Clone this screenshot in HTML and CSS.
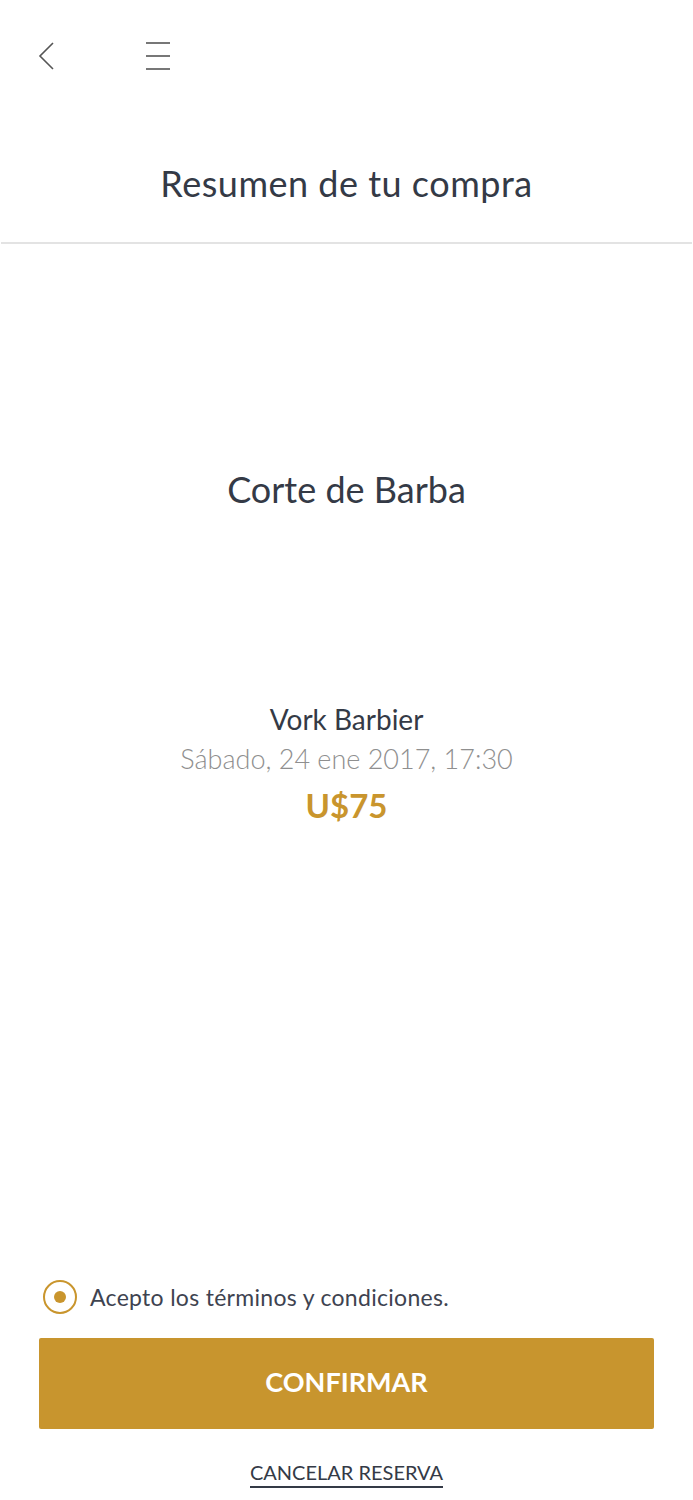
FILE: index.html
```html
<!DOCTYPE html>
<html lang="es">
<head>
    <meta charset="UTF-8">
    <meta name="viewport" content="width=device-width, initial-scale=1.0">
    <title>Resumen de tu compra</title>
    <link rel="stylesheet" href="styles.css">
</head>
<body>
    <div class="page">
        <header class="topbar">
            <a class="icon-btn back" href="#" aria-label="Volver">
                <svg width="18" height="28" viewBox="0 0 18 28">
                    <polyline points="15,1 2,14 15,27" fill="none" stroke="#555" stroke-width="1.6"/>
                </svg>
            </a>
            <a class="icon-btn menu" href="#" aria-label="Menú">
                <svg width="24" height="28" viewBox="0 0 24 28">
                    <line x1="0" y1="1" x2="24" y2="1" stroke="#555" stroke-width="1.6"/>
                    <line x1="0" y1="14" x2="24" y2="14" stroke="#555" stroke-width="1.6"/>
                    <line x1="0" y1="27" x2="24" y2="27" stroke="#555" stroke-width="1.6"/>
                </svg>
            </a>
        </header>

        <div class="page-title">
            <h1>Resumen de tu compra</h1>
        </div>

        <main class="summary">
            <h2 class="service">Corte de Barba</h2>
            <div class="details">
                <p class="shop">Vork Barbier</p>
                <p class="date">Sábado, 24 ene 2017, 17:30</p>
                <p class="price">U$75</p>
            </div>
        </main>

        <footer class="actions">
            <label class="terms">
                <span class="radio"><span class="radio-dot"></span></span>
                <span>Acepto los términos y condiciones.</span>
            </label>
            <button class="confirm-btn">CONFIRMAR</button>
            <a class="cancel-link" href="#">CANCELAR RESERVA</a>
        </footer>
    </div>
</body>
</html>
```

FILE: styles.css
```css
body {
    margin: 0;
    padding: 0;
    font-family: Lato, "Open Sans", sans-serif;
    background-color: #ffffff;
    color: #343a46;
}
.page {
    min-height: 100vh;
    display: flex;
    flex-direction: column;
}
.topbar {
    display: flex;
    align-items: center;
    height: 112px;
    padding: 0 0 0 38px;
}
.icon-btn {
    display: flex;
    align-items: center;
}
.icon-btn svg {
    display: block;
}
.menu {
    margin-left: 90px;
}
.page-title {
    height: 130px;
    display: flex;
    align-items: center;
    justify-content: center;
    border-bottom: 2px solid #e3e3e3;
    margin: 0 1px;
}
.page-title h1 {
    margin: 0;
    font-size: 36px;
    font-weight: 400;
    letter-spacing: 0.5px;
    color: #343a46;
    position: relative;
    top: 6px;
}
.summary {
    flex-grow: 1;
    display: flex;
    flex-direction: column;
    align-items: center;
    text-align: center;
}
.service {
    margin: 223px 0 0;
    font-size: 36px;
    font-weight: 400;
    line-height: 44px;
    color: #343a46;
}
.details {
    margin-top: 188px;
}
.details p {
    margin: 0;
}
.shop {
    font-size: 28px;
    line-height: 40px;
    color: #343a46;
}
.date {
    font-size: 27px;
    font-weight: 300;
    line-height: 40px;
    color: #8f8f8f;
}
.price {
    font-size: 33px;
    font-weight: 700;
    line-height: 46px;
    color: #c9952d;
    padding-top: 3px;
}
.actions {
    display: flex;
    flex-direction: column;
    align-items: center;
    padding: 0 39px 12px;
}
.terms {
    align-self: stretch;
    display: flex;
    align-items: center;
    gap: 13px;
    font-size: 23px;
    letter-spacing: 0.3px;
    color: #3e4350;
    padding-left: 4px;
    height: 36px;
}
.radio {
    width: 34px;
    height: 34px;
    border: 2px solid #c9952d;
    border-radius: 50%;
    display: flex;
    align-items: center;
    justify-content: center;
    box-sizing: border-box;
}
.radio-dot {
    width: 12px;
    height: 12px;
    border-radius: 50%;
    background-color: #c9952d;
}
.confirm-btn {
    align-self: stretch;
    margin-top: 23px;
    height: 91px;
    border: none;
    border-radius: 2px;
    background-color: #c8952e;
    color: #ffffff;
    font-family: inherit;
    font-size: 27px;
    font-weight: 700;
    padding-bottom: 5px;
    cursor: pointer;
}
.cancel-link {
    margin-top: 31px;
    font-size: 20px;
    color: #343a46;
    text-decoration: none;
    border-bottom: 2px solid #343a46;
    line-height: 24px;
    padding-bottom: 2px;
}
```
